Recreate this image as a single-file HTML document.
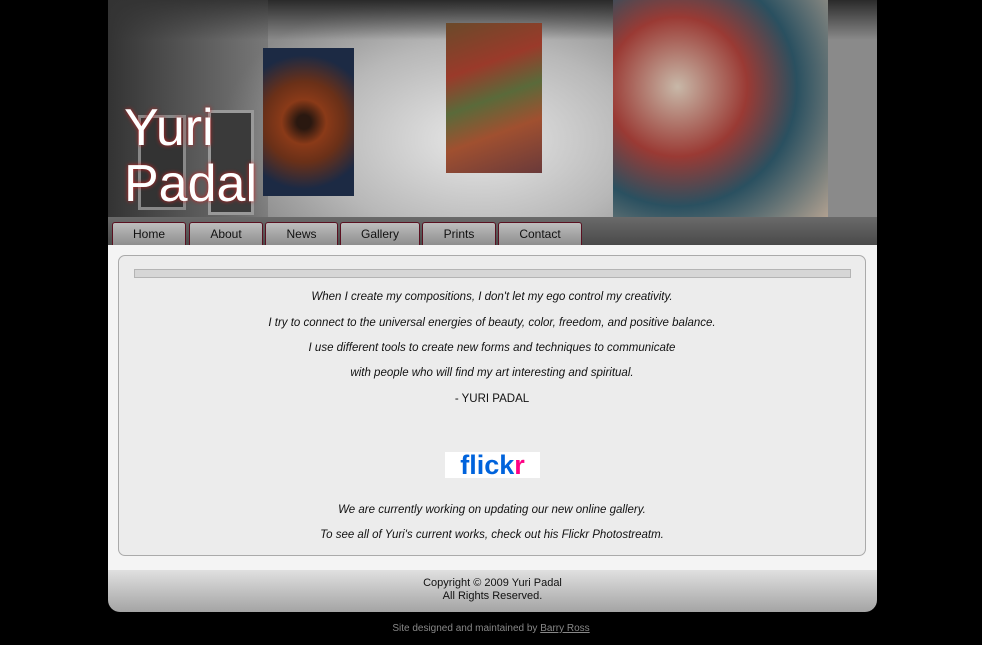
<!DOCTYPE html>
<html><head><meta charset="utf-8"><style>
*{margin:0;padding:0;box-sizing:border-box}
body{width:982px;height:645px;background:#000;font-family:"Liberation Sans",sans-serif;position:relative;overflow:hidden}
.abs{position:absolute}
#hdr{left:108px;top:0;width:769px;height:217px;overflow:hidden;background:radial-gradient(ellipse 260px 160px at 370px 140px,#e8e8e8,#b8b8b8 60%,#8a8a8a);}
#nav{left:108px;top:217px;width:769px;height:28px;background:linear-gradient(#6a6a6a,#4a4a4a)}
.tab{position:absolute;top:5px;height:23px;background:linear-gradient(#bdbdbd,#8e8e8e);border:1px solid #5a1020;border-bottom:none;border-radius:3px 3px 0 0;font-size:12px;color:#111;text-align:center;line-height:22px}
#main{left:108px;top:245px;width:769px;height:325px;background:#f4f4f4}
#box{left:118px;top:255px;width:748px;height:301px;background:#ececec;border:1px solid #aaa;border-radius:7px}
#bar{left:134px;top:269px;width:717px;height:9px;background:#d6d6d6;border:1px solid #b4b4b4}
.q{position:absolute;left:118px;width:748px;text-align:center;font-size:11.5px;font-style:italic;color:#111}
#ftr{left:108px;top:570px;width:769px;height:42px;background:linear-gradient(#e0e0e0,#a4a4a4);border-radius:0 0 12px 12px;text-align:center;font-size:11px;color:#111;padding-top:7px;line-height:13px}
</style></head><body>
<div id="hdr" class="abs">
 <div class="abs" style="left:0;top:0;width:769px;height:40px;background:linear-gradient(#2a2a2a,rgba(60,60,60,0))"></div>
 <div class="abs" style="left:0;top:0;width:160px;height:217px;background:linear-gradient(90deg,#333,rgba(80,80,80,.3))"></div>
 <div class="abs" style="left:30px;top:115px;width:48px;height:95px;background:#333;border:3px solid #888"></div>
 <div class="abs" style="left:100px;top:110px;width:46px;height:105px;background:#3a3a3a;border:3px solid #999"></div>
 <div class="abs" style="left:155px;top:48px;width:91px;height:148px;background:radial-gradient(circle at 45% 50%,#2a1810 8%,#8a3a18 25%,#6a3018 45%,#1c2a44 75%)"></div>
 <div class="abs" style="left:338px;top:23px;width:96px;height:150px;background:linear-gradient(160deg,#6a4a2a,#9a3a2a 30%,#5a6a3a 50%,#a05030 70%,#6a3a3a)"></div>
 <div class="abs" style="left:505px;top:0;width:215px;height:217px;background:radial-gradient(circle at 30% 40%,#c8b8a8,#9a3a34 35%,#2a5060 60%,#b0a090)"></div>
 <div class="abs" style="left:16px;top:100px;color:#fff;font:52px/56px 'Liberation Sans',sans-serif;text-shadow:0 0 4px #c22">Yuri<br>Padal</div>
</div>
<div id="nav" class="abs">
 <div class="tab" style="left:4px;width:74px">Home</div>
 <div class="tab" style="left:81px;width:74px">About</div>
 <div class="tab" style="left:157px;width:73px">News</div>
 <div class="tab" style="left:232px;width:80px">Gallery</div>
 <div class="tab" style="left:314px;width:74px">Prints</div>
 <div class="tab" style="left:390px;width:84px">Contact</div>
</div>
<div id="main" class="abs"></div>
<div id="box" class="abs"></div>
<div id="bar" class="abs"></div>
<div class="q" style="top:291px">When I create my compositions, I don't let my ego control my creativity.</div>
<div class="q" style="top:317px">I try to connect to the universal energies of beauty, color, freedom, and positive balance.</div>
<div class="q" style="top:342px">I use different tools to create new forms and techniques to communicate</div>
<div class="q" style="top:367px">with people who will find my art interesting and spiritual.</div>
<div class="q" style="top:393px;font-style:normal">- YURI PADAL</div>
<div class="abs" style="left:445px;top:452px;width:95px;height:26px;background:#fff;font:bold 27px/26px 'Liberation Sans',sans-serif;text-align:center"><span style="color:#0063dc">flick</span><span style="color:#ff0084">r</span></div>
<div class="q" style="top:504px">We are currently working on updating our new online gallery.</div>
<div class="q" style="top:529px">To see all of Yuri's current works, check out his Flickr Photostreatm.</div>
<div id="ftr" class="abs">Copyright © 2009 Yuri Padal<br>All Rights Reserved.</div>
<div class="abs" style="left:0;top:623px;width:982px;text-align:center;font-size:10px;color:#888">Site designed and maintained by <u>Barry Ross</u></div>
</body></html>
